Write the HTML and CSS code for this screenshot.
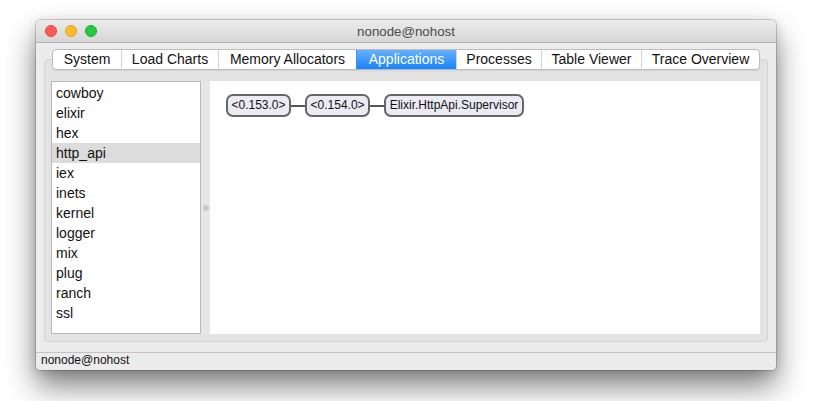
FILE: index.html
```html
<!DOCTYPE html>
<html>
<head>
<meta charset="utf-8">
<link rel="stylesheet" href="styles.css">
</head>
<body>
<div class="window">
  <div class="titlebar">
    <div class="lights">
      <span class="light red"></span>
      <span class="light yellow"></span>
      <span class="light green"></span>
    </div>
    <div class="title">nonode@nohost</div>
    <div></div>
  </div>
  <div class="content">
    <div class="tabs">
      <div class="tab">System</div>
      <div class="tab">Load Charts</div>
      <div class="tab">Memory Allocators</div>
      <div class="tab active">Applications</div>
      <div class="tab">Processes</div>
      <div class="tab">Table Viewer</div>
      <div class="tab">Trace Overview</div>
    </div>
    <div class="panel">
      <ul class="list">
        <li>cowboy</li>
        <li>elixir</li>
        <li>hex</li>
        <li class="selected">http_api</li>
        <li>iex</li>
        <li>inets</li>
        <li>kernel</li>
        <li>logger</li>
        <li>mix</li>
        <li>plug</li>
        <li>ranch</li>
        <li>ssl</li>
      </ul>
      <div class="splitter"><span class="grip"></span></div>
      <div class="canvas">
        <div class="tree">
          <div class="node">&lt;0.153.0&gt;</div>
          <div class="edge"></div>
          <div class="node">&lt;0.154.0&gt;</div>
          <div class="edge"></div>
          <div class="node">Elixir.HttpApi.Supervisor</div>
        </div>
      </div>
    </div>
    <div class="status">nonode@nohost</div>
  </div>
</div>
</body>
</html>
```

FILE: styles.css
```css
html, body {
  margin: 0;
  background: #ffffff;
}
body {
  min-height: 401px;
  box-sizing: border-box;
  padding: 20px 0 0 36px;
  font-family: "Liberation Sans", Arial, sans-serif;
  color: #111;
}
.window {
  width: 740px;
  height: 350px;
  box-sizing: border-box;
  background: #ececec;
  border-radius: 5px 5px 4px 4px;
  box-shadow: 0 0 0 1px rgba(0,0,0,0.16), 0 16px 30px rgba(0,0,0,0.5), 0 2px 12px rgba(0,0,0,0.14);
  display: flex;
  flex-direction: column;
  overflow: hidden;
}
.titlebar {
  height: 22px;
  flex: none;
  background: linear-gradient(#ececec, #d6d6d6);
  border-bottom: 1px solid #b3b3b3;
  display: grid;
  grid-template-columns: 1fr auto 1fr;
  align-items: center;
}
.lights {
  display: flex;
  gap: 8px;
  padding-left: 9px;
}
.light {
  width: 12px;
  height: 12px;
  border-radius: 50%;
  box-sizing: border-box;
}
.red { background: #fc5b57; border: 1px solid #e2463f; }
.yellow { background: #fdbc2e; border: 1px solid #e1a116; }
.green { background: #2ac842; border: 1px solid #1aab29; }
.title {
  font-size: 13.3px;
  color: #4a4a4a;
}
.content {
  flex: 1;
  display: flex;
  flex-direction: column;
  padding-top: 6px;
  min-height: 0;
}
.tabs {
  position: relative;
  z-index: 1;
  align-self: center;
  width: 708px;
  height: 21px;
  box-sizing: border-box;
  display: grid;
  grid-template-columns: 68px 97px 138px 100px 85px 100px 1fr;
  background: #fff;
  border: 1px solid #bcbcbc;
  border-radius: 4px;
  box-shadow: 0 1px 1px rgba(0,0,0,0.08);
  margin-bottom: -11px;
  overflow: hidden;
}
.tab {
  font-size: 14px;
  line-height: 19px;
  text-align: center;
  border-left: 1px solid #d4d4d4;
  color: #111;
  white-space: nowrap;
}
.tab:first-child { border-left: none; }
.tab.active {
  background: linear-gradient(#68b1fb, #1682fb);
  color: #fff;
  border-left-color: #3d8ff0;
}
.panel {
  margin: 0 8px;
  height: 283px;
  box-sizing: border-box;
  background: #e3e3e3;
  border: 1px solid #d3d3d3;
  border-radius: 4px;
  padding: 21px 7px 7px 6px;
  display: flex;
}
.list {
  list-style: none;
  margin: 0;
  padding: 1px 0;
  width: 150px;
  box-sizing: border-box;
  background: #fff;
  border: 1px solid #b9b9b9;
  font-size: 14px;
}
.list li {
  height: 20px;
  line-height: 20px;
  padding-left: 4px;
}
.list li.selected {
  background: #dcdcdc;
}
.splitter {
  width: 9px;
  display: flex;
  align-items: center;
  justify-content: center;
  background: #e6e6e6;
}
.grip {
  width: 6px;
  height: 6px;
  border-radius: 50%;
  background: #cacaca;
  margin-left: 1px;
}
.canvas {
  flex: 1;
  background: #fff;
  padding: 13px 16px;
}
.tree {
  display: flex;
  align-items: center;
}
.node {
  height: 23px;
  box-sizing: border-box;
  border: 2px solid #666;
  border-radius: 7px;
  background: #ebebf3;
  font-size: 12px;
  line-height: 19px;
  padding: 0 3.5px;
  color: #111;
  white-space: nowrap;
}
.edge {
  width: 14px;
  height: 2px;
  background: #555;
}
.status {
  margin-top: 10px;
  flex: 1;
  border-top: 1px solid #c3c3c3;
  font-size: 12px;
  line-height: 15px;
  padding-left: 5px;
  color: #111;
}
```
